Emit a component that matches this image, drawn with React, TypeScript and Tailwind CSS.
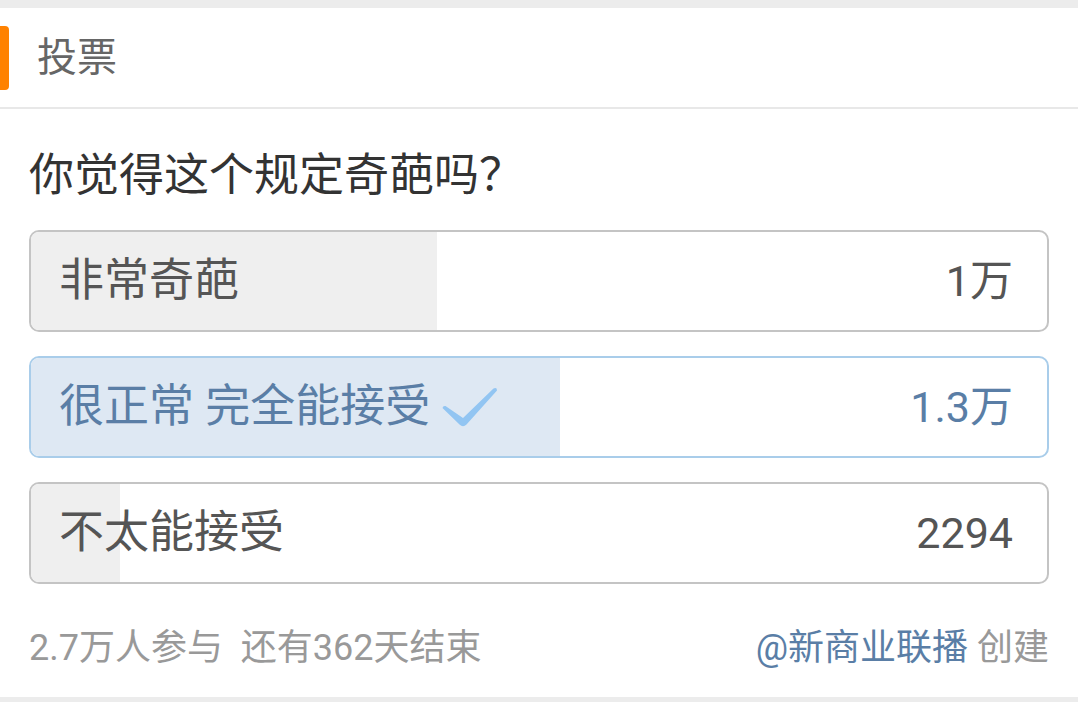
import React from "react";

const font = { fontFamily: 'Roboto, "Noto Sans CJK SC", sans-serif' };

function Check() {
  return (
    <svg width="56" height="42" viewBox="0 0 56 42" className="ml-[12px] mt-[2px]">
      <path
        d="M0.5 21 Q1 18.5 3.5 19 L21 31 L51.5 1.5 Q55 0 55 3.5 L24.5 37.5 Q21 41 17.5 37.5 Z"
        fill="#92c5f2"
      />
    </svg>
  );
}

function Option({ label, count, pct, selected }: { label: string; count: string; pct: number; selected?: boolean }) {
  return (
    <div
      className={`relative h-[102px] rounded-[10px] border-2 overflow-hidden ${selected ? "border-[#a9cdea] bg-white" : "border-[#c4c4c4] bg-white"}`}
    >
      <div
        className={`absolute left-0 top-0 bottom-0 ${selected ? "bg-[#dee8f3]" : "bg-[#efefef]"}`}
        style={{ width: `${pct}px` }}
      />
      <div className="relative flex h-full items-center justify-between pl-[28px] pr-[34px]">
        <div className={`flex items-center text-[45px] ${selected ? "text-[#5a7ea6]" : "text-[#555555]"}`}>
          <span>{label}</span>
          {selected && <Check />}
        </div>
        <span className={`text-[43px] ${selected ? "text-[#5a7ea6]" : "text-[#555555]"}`}>{count}</span>
      </div>
    </div>
  );
}

export default function App() {
  return (
    <div className="w-[1078px] h-[702px] bg-white overflow-hidden flex flex-col" style={font}>
      <div className="h-[8px] bg-[#ececec] shrink-0" />
      <div className="h-[101px] shrink-0 flex items-center border-b-2 border-[#e8e8e8]">
        <div className="w-[9px] h-[64px] bg-[#ff8200] rounded-r-[4px]" />
        <span className="ml-[28px] text-[40px] text-[#666666]">投票</span>
      </div>
      <div className="px-[29px] flex-1 flex flex-col">
        <div
          className="mt-[36px] text-[45px] text-[#333333] leading-[54px]"
          style={{ fontFamily: '"Noto Sans CJK SC", sans-serif' }}
        >
          你觉得这个规定奇葩吗？
        </div>
        <div className="mt-[31px] flex flex-col gap-[24px]">
          <Option label="非常奇葩" count="1万" pct={406} />
          <Option label="很正常 完全能接受" count="1.3万" pct={529} selected />
          <Option label="不太能接受" count="2294" pct={89} />
        </div>
        <div className="mt-[44px] flex items-center justify-between text-[36px] leading-[40px]">
          <span className="text-[#999999]">2.7万人参与&nbsp;&nbsp;还有362天结束</span>
          <span>
            <span className="text-[#5a7ea6]">@新商业联播</span>
            <span className="text-[#999999]"> 创建</span>
          </span>
        </div>
      </div>
      <div className="h-[5px] bg-[#ececec] shrink-0" />
    </div>
  );
}
